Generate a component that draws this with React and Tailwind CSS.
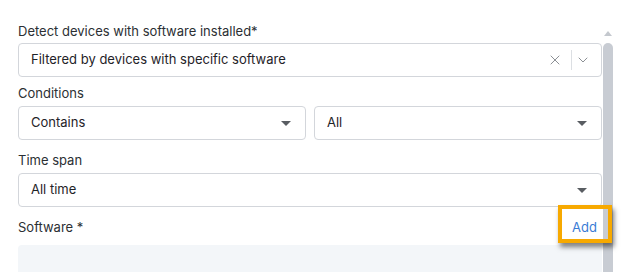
import { X, ChevronDown } from "lucide-react";

function Caret() {
  return (
    <svg width="10" height="5" viewBox="0 0 10 5" className="shrink-0">
      <path d="M0 0 L10 0 L5 5 Z" fill="#595d62" />
    </svg>
  );
}

function Select({ value, className = "" }) {
  return (
    <div
      className={`h-[34px] flex items-center justify-between pl-3 pr-[14px] rounded border border-[#d3d6db] bg-white text-[13px] text-[#1f2328] ${className}`}
    >
      <span>{value}</span>
      <Caret />
    </div>
  );
}

function Label({ children, className = "" }) {
  return <div className={`h-5 leading-5 text-[13px] text-[#2b2f33] ${className}`}>{children}</div>;
}

export default function App() {
  return (
    <div className="w-[623px] h-[272px] overflow-hidden bg-white flex font-['Inter',sans-serif]">
      <div className="relative w-[603px] pl-[18px] pr-[1px] pt-[21px]">
        <Label>Detect devices with software installed*</Label>
        <div className="mt-[2px] h-[34px] flex items-center justify-between pl-3 rounded border border-[#d3d6db] bg-white text-[13px] text-[#1f2328]">
          <span>Filtered by devices with specific software</span>
          <div className="flex items-center h-full">
            <X className="w-4 h-4 text-[#6f747a]" strokeWidth={1.2} />
            <div className="ml-[8px] mr-[3px] w-px h-5 bg-[#dcdfe3]" />
            <ChevronDown className="w-4 h-4 mr-[10px] text-[#6f747a]" strokeWidth={1.2} />
          </div>
        </div>

        <Label className="mt-[6px]">Conditions</Label>
        <div className="mt-[3px] flex gap-2">
          <Select value="Contains" className="flex-1" />
          <Select value="All" className="flex-1" />
        </div>

        <Label className="mt-[10px]">Time span</Label>
        <Select value="All time" className="mt-[3px]" />

        <div className="mt-[10px] flex items-center justify-between">
          <Label>Software *</Label>
          <span className="text-[13px] leading-5 text-[#3a7bd5] mr-[5px]">Add</span>
        </div>
        <div className="mt-2 h-[40px] rounded-t bg-[#f3f6f9]" />

        <div className="absolute left-[558px] top-[205px] w-[54px] h-[38px] border-[4px] border-[#f7a900] shadow-[2px_4px_5px_rgba(0,0,0,0.5)]" />
      </div>

      <div className="w-[10px] flex flex-col items-center pt-[30px]">
        <svg width="10" height="6" viewBox="0 0 10 6">
          <path d="M1 6 L5 1 L9 6 Z" fill="#c4c8ce" />
        </svg>
        <div className="mt-[7px] w-[10px] flex-1 rounded-t-full bg-[#c8ccd3]" />
      </div>
    </div>
  );
}
